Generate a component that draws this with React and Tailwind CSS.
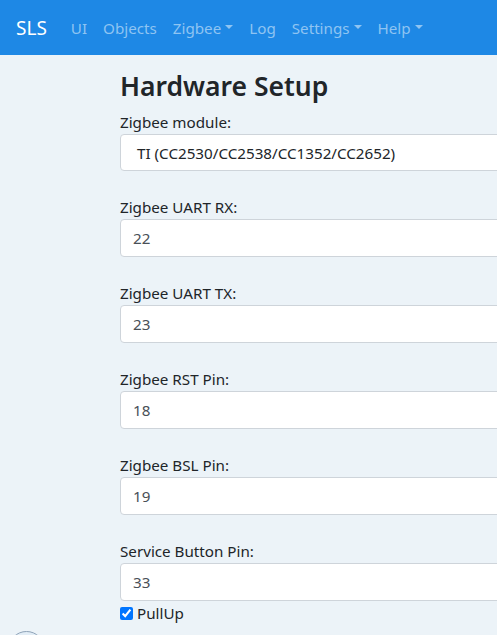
import React from "react";

const fields = [
  { label: "Zigbee UART RX:", value: "22" },
  { label: "Zigbee UART TX:", value: "23" },
  { label: "Zigbee RST Pin:", value: "18" },
  { label: "Zigbee BSL Pin:", value: "19" },
];

const Caret = () => (
  <span className="ml-[4px] inline-block align-middle border-l-[4px] border-r-[4px] border-t-[4px] border-l-transparent border-r-transparent border-t-[#8fc4f2] mb-[2px]" />
);

const NavLink = ({ children, caret }) => (
  <a className="px-2 py-2 text-[#8fc4f2] leading-6 whitespace-nowrap flex items-center">
    {children}
    {caret && <Caret />}
  </a>
);

const App = () => {
  return (
    <div
      className="relative h-screen overflow-hidden bg-[#ecf3f8] text-[#212529] text-[15.2px]"
      style={{ fontFamily: '"Noto Sans", "Open Sans", sans-serif' }}
    >
      <nav className="h-[55px] bg-[#1e88e5] flex items-center px-4">
        <a className="text-white text-[19px] leading-[30px] mr-4">SLS</a>
        <NavLink>UI</NavLink>
        <NavLink>Objects</NavLink>
        <NavLink caret>Zigbee</NavLink>
        <NavLink>Log</NavLink>
        <NavLink caret>Settings</NavLink>
        <NavLink caret>Help</NavLink>
      </nav>

      <div className="ml-[120px] w-[600px]">
        <h3 className="mt-[14px] mb-[7px] text-[26.5px] leading-[34px] font-semibold">
          Hardware Setup
        </h3>

        <div className="mb-[24px]">
          <label className="block leading-6">Zigbee module:</label>
          <div className="h-[37px] bg-white border border-[#ced4da] rounded-[4px] pl-[16px] flex items-center leading-6">
            TI (CC2530/CC2538/CC1352/CC2652)
          </div>
        </div>

        {fields.map((f) => (
          <div key={f.label} className="mb-[24px]">
            <label className="block leading-6">{f.label}</label>
            <input
              readOnly
              defaultValue={f.value}
              className="block w-full h-[38px] bg-white border border-[#ced4da] rounded-[4px] px-3 text-[#495057] leading-6 outline-none"
            />
          </div>
        ))}

        <div>
          <label className="block leading-6">Service Button Pin:</label>
          <input
            readOnly
            defaultValue="33"
            className="block w-full h-[38px] bg-white border border-[#ced4da] rounded-[4px] px-3 text-[#495057] leading-6 outline-none"
          />
          <div className="flex items-center leading-6">
            <input
              type="checkbox"
              defaultChecked
              className="w-[13px] h-[13px] m-0 mr-[4px] accent-[#0075ff]"
            />
            <span>PullUp</span>
          </div>
        </div>
      </div>

      <div className="absolute left-[8px] top-[631px] w-[37px] h-[37px] rounded-full border border-[#8fa3b8] bg-[#e2edf6]" />
    </div>
  );
};

export default App;
